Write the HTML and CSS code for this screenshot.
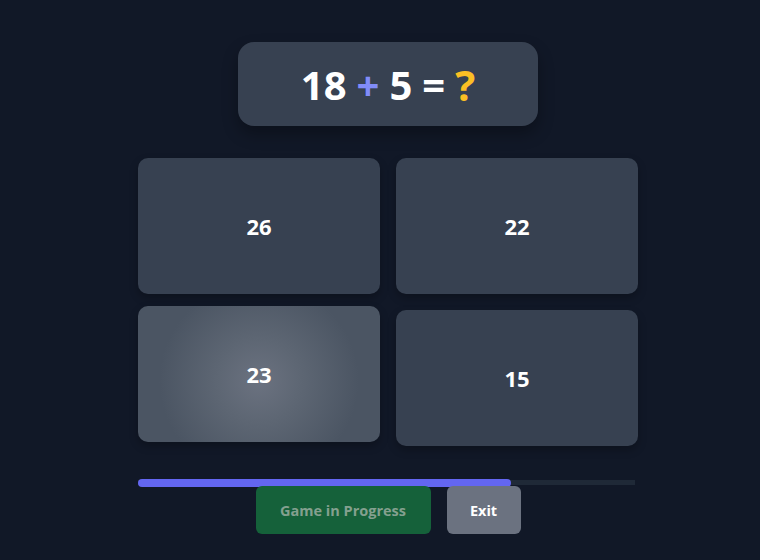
FILE: index.html
```html
<!DOCTYPE html>
<html>
<head>
<meta charset="utf-8">
<link rel="stylesheet" href="styles.css">
</head>
<body>
<div class="page">
  <div class="game">
    <div class="equation">
      <span class="num">18</span>
      <span class="op">+</span>
      <span class="num">5</span>
      <span class="num">=</span>
      <span class="q">?</span>
    </div>
    <div class="grid">
      <div class="card">26</div>
      <div class="card">22</div>
      <div class="card hover">23</div>
      <div class="card">15</div>
    </div>
    <div class="progress"><div class="fill" style="width:75%"></div></div>
    <div class="actions">
      <button class="btn status">Game in Progress</button>
      <button class="btn exit">Exit</button>
    </div>
  </div>
</div>
</body>
</html>
```
FILE: styles.css
```css
html, body {
  margin: 0;
  padding: 0;
  background: #111827;
  font-family: "Open Sans", "Noto Sans", sans-serif;
  color: #fff;
}
.page {
  width: 760px;
  height: 560px;
  padding-left: 16px;
  box-sizing: border-box;
  display: flex;
  justify-content: center;
}
.game {
  width: 500px;
  padding-top: 42px;
  display: flex;
  flex-direction: column;
  align-items: center;
}
.equation {
  width: 300px;
  height: 84px;
  background: #374151;
  border-radius: 16px;
  box-shadow: 0 8px 16px rgba(0, 0, 0, 0.3);
  display: flex;
  align-items: center;
  justify-content: center;
  gap: 10px;
  font-size: 40px;
  font-weight: 700;
  line-height: 1;
  padding-top: 2px;
  box-sizing: border-box;
}
.op { color: #818cf8; }
.q { color: #fbbf24; font-size: 42px; }
.grid {
  margin-top: 32px;
  width: 500px;
  display: grid;
  grid-template-columns: 242px 242px;
  grid-auto-rows: 136px;
  column-gap: 16px;
  row-gap: 16px;
}
.card {
  background: #374151;
  border-radius: 10px;
  box-shadow: 0 4px 8px rgba(0, 0, 0, 0.25);
  display: flex;
  align-items: center;
  justify-content: center;
  font-size: 22px;
  font-weight: 700;
}
.card.hover {
  transform: translateY(-4px);
  background: radial-gradient(circle at 50% 55%, #6b7280 0%, #5d6673 30%, #4b5563 70%);
}
.progress {
  margin-top: 34px;
  width: 497px;
  height: 5px;
  background: #1f2937;
  align-self: flex-start;
  display: flex;
  align-items: center;
}
.fill {
  height: 8px;
  background: #6366f1;
  border-radius: 4px;
}
.actions {
  margin-top: 1px;
  display: flex;
  gap: 16px;
}
.btn {
  height: 48px;
  border: none;
  border-radius: 6px;
  font-family: "Open Sans", "Noto Sans", sans-serif;
  font-size: 14.5px;
  font-weight: 700;
  padding: 0;
}
.status {
  width: 175px;
  background: #15613a;
  color: #84a08f;
}
.exit {
  width: 74px;
  background: #6b7280;
  color: #fff;
}
```
